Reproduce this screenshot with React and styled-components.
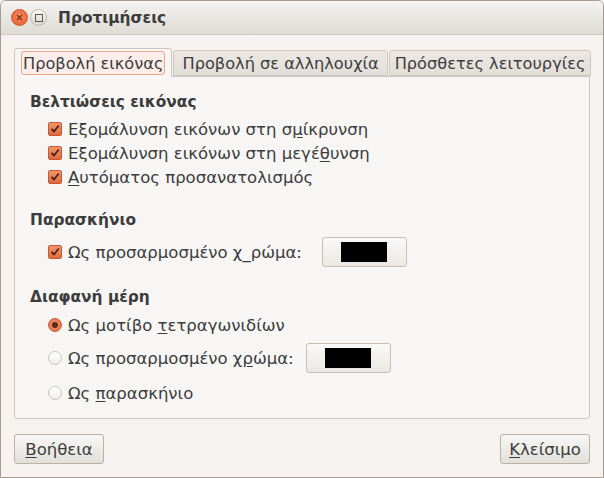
import React from "react";
import styled, { createGlobalStyle } from "styled-components";

const FONT = `"DejaVu Sans", "Noto Sans", sans-serif`;

const Global = createGlobalStyle`
  html, body { margin: 0; padding: 0; background: #f2f1f0; }
  body { font-family: ${FONT}; }
`;

const Window = styled.div`
  width: 604px;
  height: 478px;
  box-sizing: border-box;
  border: 1px solid #a49c92;
  border-radius: 6px 6px 0 0;
  background: #f5f2ef;
  display: flex;
  flex-direction: column;
  overflow: hidden;
  font-family: ${FONT};
  color: #3c3c3c;
`;

const TitleBar = styled.div`
  height: 33px;
  flex: none;
  display: flex;
  align-items: center;
  padding-left: 10px;
  gap: 2px;
  background: linear-gradient(#f4f3f1, #dedbd5);
  border-bottom: 1px solid #cfcac3;
`;

const WinButton = styled.div`
  width: 17px;
  height: 17px;
  border-radius: 50%;
  box-sizing: border-box;
  display: flex;
  align-items: center;
  justify-content: center;
  background: ${(p) => (p.$close ? "radial-gradient(circle at 50% 40%, #f78c63, #e8572a)" : "linear-gradient(#fbfaf9, #d9d6d1)")};
  border: 1px solid ${(p) => (p.$close ? "#c9542e" : "#bab5ad")};
`;

const Title = styled.div`
  margin-left: 9px;
  font-weight: 700;
  font-size: 15.4px;
  color: #3c3c3c;
`;

const Body = styled.div`
  flex: 1;
  display: flex;
  flex-direction: column;
  padding: 12px 13px 13px 13px;
`;

const Tabs = styled.div`
  display: flex;
  align-items: flex-end;
  height: 29px;
  position: relative;
  z-index: 1;
`;

const Tab = styled.div`
  box-sizing: border-box;
  flex: none;
  white-space: nowrap;
  height: ${(p) => (p.$active ? "29px" : "26px")};
  padding: ${(p) => (p.$active ? "3px 6px 2px 6px" : `0 ${p.$pad || 5}px`)};
  margin-right: 1px;
  display: flex;
  align-items: center;
  font-size: 16.2px;
  border: 1px solid #cdc7bf;
  border-bottom: ${(p) => (p.$active ? "1px solid #f7f6f4" : "1px solid #cdc7bf")};
  border-radius: 3px 3px 0 0;
  background: ${(p) => (p.$active ? "#f7f6f4" : "linear-gradient(#ebe8e4, #e2ded8)")};
  margin-bottom: ${(p) => (p.$active ? "-1px" : "0")};
`;

const FocusLabel = styled.span`
  border: 1px solid #f0a48a;
  border-radius: 3px;
  padding: 0 1px;
  height: 22px;
  display: flex;
  align-items: center;
  background: #fbeeea;
`;

const Panel = styled.div`
  flex: 1;
  border: 1px solid #cdc7bf;
  border-radius: 0 0 3px 3px;
  background: #f7f6f4;
  padding: 14px 15px 0 15px;
  display: flex;
  flex-direction: column;
`;

const Heading = styled.div`
  font-weight: 700;
  font-size: 15.4px;
  height: 22px;
  line-height: 22px;
  margin-top: ${(p) => p.$mt || 0}px;
  margin-bottom: ${(p) => p.$mb || 0}px;
`;

const Row = styled.div`
  display: flex;
  align-items: center;
  height: ${(p) => p.$h || 24}px;
  padding-left: 18px;
  font-size: 16.5px;
  white-space: nowrap;
`;

const Check = styled.span`
  width: 14px;
  height: 14px;
  flex: none;
  box-sizing: border-box;
  border-radius: 2px;
  background: linear-gradient(#f39470, #e16a3d);
  border: 1px solid #c75a33;
  display: inline-flex;
  align-items: center;
  justify-content: center;
  margin-right: 6px;
`;

const Radio = styled.span`
  width: 14px;
  height: 14px;
  flex: none;
  box-sizing: border-box;
  border-radius: 50%;
  display: inline-flex;
  align-items: center;
  justify-content: center;
  margin-right: 6px;
  background: ${(p) => (p.$on ? "radial-gradient(circle at 50% 45%, #f59a76, #e0693b)" : "linear-gradient(#ffffff, #f0eeeb)")};
  border: 1px solid ${(p) => (p.$on ? "#c65b34" : "#c9c4bd")};
`;

const Dot = styled.span`
  width: 6px;
  height: 6px;
  border-radius: 50%;
  background: #5a2c1c;
`;

const U = styled.span`
  text-decoration: underline;
  text-underline-offset: 2px;
`;

const ColorButton = styled.div`
  margin-left: ${(p) => p.$ml || 8}px;
  width: 85px;
  height: 30px;
  flex: none;
  box-sizing: border-box;
  border: 1px solid #c6bfb6;
  border-radius: 3px;
  background: linear-gradient(#faf9f8, #ebe8e4);
  display: flex;
  align-items: center;
  justify-content: center;
`;

const Swatch = styled.div`
  width: 46px;
  height: 20px;
  background: #000;
`;

const Footer = styled.div`
  display: flex;
  justify-content: space-between;
  margin-top: 15px;
`;

const Button = styled.div`
  width: 90px;
  height: 30px;
  box-sizing: border-box;
  border: 1px solid #b9b2a9;
  border-radius: 3px;
  background: linear-gradient(#f8f7f5, #e3e0db);
  display: flex;
  align-items: center;
  justify-content: center;
  font-size: 16.5px;
`;

const CheckMark = () => (
  <svg width="10" height="10" viewBox="0 0 10 10">
    <path d="M1.5 5 L4 7.5 L8.8 1.5" stroke="#4a2316" strokeWidth="1.8" fill="none" />
  </svg>
);

export default function App() {
  return (
    <>
      <Global />
      <Window>
        <TitleBar>
          <WinButton $close>
            <svg width="7" height="7" viewBox="0 0 7 7">
              <path d="M1 1 L6 6 M6 1 L1 6" stroke="#7a2f16" strokeWidth="1.3" />
            </svg>
          </WinButton>
          <WinButton>
            <svg width="8" height="8" viewBox="0 0 8 8">
              <rect x="0.5" y="0.5" width="7" height="7" fill="none" stroke="#5b5852" strokeWidth="1" />
            </svg>
          </WinButton>
          <Title>Προτιμήσεις</Title>
        </TitleBar>
        <Body>
          <Tabs>
            <Tab $active>
              <FocusLabel>Προβολή εικόνας</FocusLabel>
            </Tab>
            <Tab $pad={8}>Προβολή σε αλληλουχία</Tab>
            <Tab $pad={5}>Πρόσθετες λειτουργίες</Tab>
          </Tabs>
          <Panel>
            <Heading $mb={4}>Βελτιώσεις εικόνας</Heading>
            <Row>
              <Check><CheckMark /></Check>
              <span>Εξομάλυνση εικόνων στη σ<U>μ</U>ίκρυνση</span>
            </Row>
            <Row>
              <Check><CheckMark /></Check>
              <span>Εξομάλυνση εικόνων στη μεγέ<U>θ</U>υνση</span>
            </Row>
            <Row>
              <Check><CheckMark /></Check>
              <span><U>Α</U>υτόματος προσανατολισμός</span>
            </Row>
            <Heading $mt={20} $mb={5}>Παρασκήνιο</Heading>
            <Row $h={32}>
              <Check><CheckMark /></Check>
              <span>Ως προσαρμοσμένο χ_ρώμα:</span>
              <ColorButton $ml={20}><Swatch /></ColorButton>
            </Row>
            <Heading $mt={18} $mb={2}>Διαφανή μέρη</Heading>
            <Row $h={30}>
              <Radio $on><Dot /></Radio>
              <span>Ως μοτίβο <U>τ</U>ετραγωνιδίων</span>
            </Row>
            <Row $h={36}>
              <Radio />
              <span>Ως προσαρμοσμένο χ<U>ρ</U>ώμα:</span>
              <ColorButton $ml={12}><Swatch /></ColorButton>
            </Row>
            <Row $h={34}>
              <Radio />
              <span>Ως <U>π</U>αρασκήνιο</span>
            </Row>
          </Panel>
          <Footer>
            <Button><span><U>Β</U>οήθεια</span></Button>
            <Button><span><U>Κ</U>λείσιμο</span></Button>
          </Footer>
        </Body>
      </Window>
    </>
  );
}
